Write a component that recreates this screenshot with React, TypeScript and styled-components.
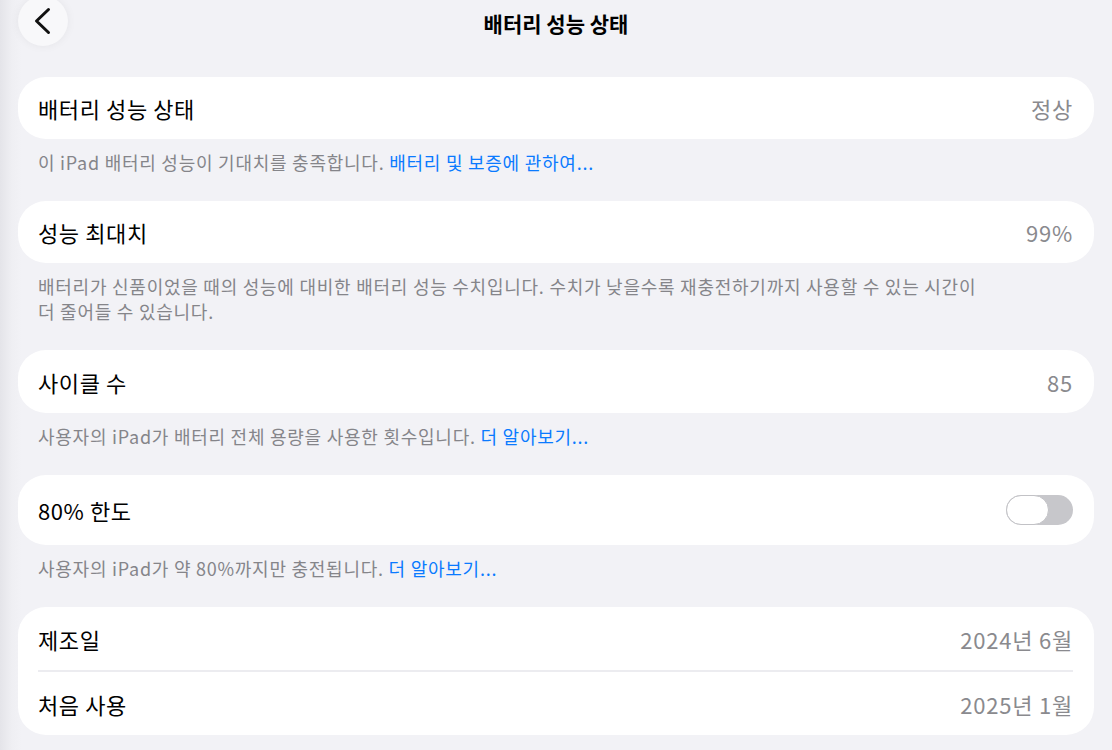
import React from "react";
import styled, { createGlobalStyle } from "styled-components";

const GlobalStyle = createGlobalStyle`
  html, body {
    margin: 0;
    padding: 0;
    background: #f2f2f7;
  }
  body {
    font-family: "Noto Sans CJK KR", "Noto Sans", sans-serif;
    -webkit-font-smoothing: antialiased;
  }
`;

const Page = styled.div`
  width: 1112px;
  height: 750px;
  overflow: hidden;
  box-sizing: border-box;
  background: linear-gradient(to right, #e4e4e9 0px, #efeff3 12px, #f2f2f6 22px, #f2f2f6 100%);
  padding: 0 18px 0 18px;
`;

const Header = styled.header`
  display: grid;
  grid-template-columns: 1fr auto 1fr;
  align-items: center;
  height: 46px;
  margin-bottom: 31px;
`;

const BackButton = styled.button`
  width: 50px;
  height: 50px;
  margin-top: -4px;
  border: none;
  border-radius: 50%;
  background: #f8f8fa;
  box-shadow: 0 0 10px rgba(0, 0, 0, 0.06);
  display: flex;
  align-items: center;
  justify-content: center;
  padding: 0;
  justify-self: start;
`;

const Title = styled.h1`
  margin: 0;
  font-size: 21px;
  font-weight: 700;
  color: #000;
  letter-spacing: 0;
`;

const Card = styled.div`
  background: #ffffff;
  border-radius: 28px;
  padding: 0 21px 0 20px;
`;

const Row = styled.div<{ $h?: number }>`
  display: flex;
  align-items: center;
  justify-content: space-between;
  height: ${(p) => p.$h ?? 63}px;
`;

const Divider = styled.div`
  height: 2px;
  background: #ececf0;
`;

const Label = styled.span`
  font-size: 22px;
  color: #000;
  letter-spacing: 0.6px;
`;

const Value = styled.span`
  font-size: 22px;
  color: #8a8a8e;
  letter-spacing: 0.8px;
`;

const Footer = styled.p`
  margin: 0;
  padding: 11px 30px 26px 20px;
  font-size: 18px;
  line-height: 25px;
  color: #85858a;
  letter-spacing: 0.75px;
`;

const Link = styled.a`
  color: #0a7aff;
  text-decoration: none;
`;

const Toggle = styled.div`
  width: 67px;
  height: 30px;
  border-radius: 15px;
  background: #c7c7cb;
  position: relative;
  box-sizing: border-box;
`;

const Knob = styled.div`
  position: absolute;
  left: 0;
  top: 0;
  width: 43px;
  height: 30px;
  border-radius: 15px;
  background: #ffffff;
  border: 1.5px solid #c2c2c6;
  box-sizing: border-box;
`;

export default function App() {
  return (
    <>
      <GlobalStyle />
      <Page>
        <Header>
          <BackButton aria-label="뒤로">
            <svg width="20" height="28" viewBox="0 0 20 28" fill="none">
              <path d="M15.5 2.5 L3.5 14 L15.5 25.5" stroke="#111" strokeWidth="3" strokeLinecap="round" strokeLinejoin="round" />
            </svg>
          </BackButton>
          <Title>배터리 성능 상태</Title>
          <div />
        </Header>

        <Card>
          <Row $h={62}>
            <Label>배터리 성능 상태</Label>
            <Value>정상</Value>
          </Row>
        </Card>
        <Footer>
          이 iPad 배터리 성능이 기대치를 충족합니다. <Link>배터리 및 보증에 관하여...</Link>
        </Footer>

        <Card>
          <Row $h={62}>
            <Label>성능 최대치</Label>
            <Value>99%</Value>
          </Row>
        </Card>
        <Footer>
          배터리가 신품이었을 때의 성능에 대비한 배터리 성능 수치입니다. 수치가 낮을수록 재충전하기까지 사용할 수 있는 시간이
          <br />
          더 줄어들 수 있습니다.
        </Footer>

        <Card>
          <Row $h={63}>
            <Label>사이클 수</Label>
            <Value>85</Value>
          </Row>
        </Card>
        <Footer>
          사용자의 iPad가 배터리 전체 용량을 사용한 횟수입니다. <Link>더 알아보기...</Link>
        </Footer>

        <Card>
          <Row $h={70}>
            <Label>80% 한도</Label>
            <Toggle>
              <Knob />
            </Toggle>
          </Row>
        </Card>
        <Footer>
          사용자의 iPad가 약 80%까지만 충전됩니다. <Link>더 알아보기...</Link>
        </Footer>

        <Card>
          <Row $h={63}>
            <Label>제조일</Label>
            <Value>2024년 6월</Value>
          </Row>
          <Divider />
          <Row $h={63}>
            <Label>처음 사용</Label>
            <Value>2025년 1월</Value>
          </Row>
        </Card>
      </Page>
    </>
  );
}
